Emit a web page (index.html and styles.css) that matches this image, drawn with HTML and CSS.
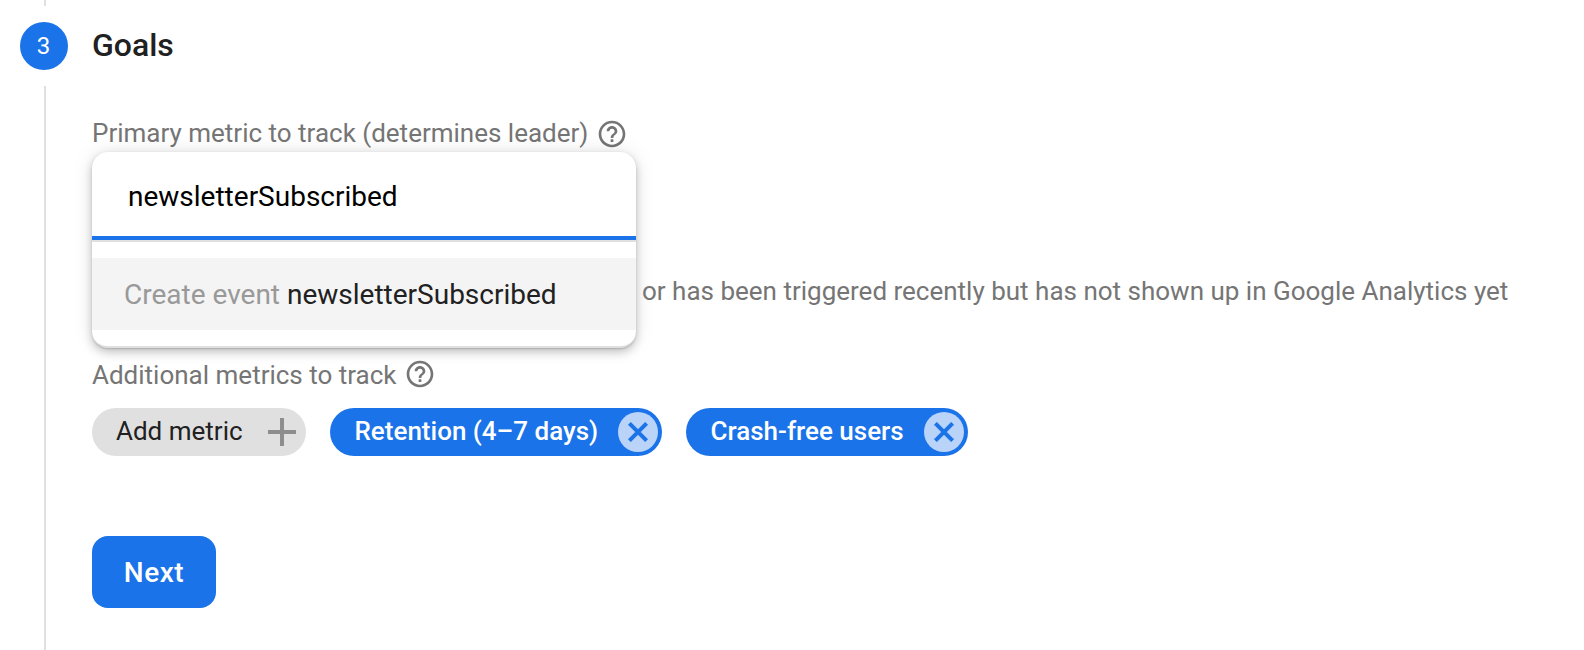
FILE: index.html
```html
<!DOCTYPE html>
<html lang="en">
<head>
<meta charset="utf-8">
<title>Goals</title>
<link rel="stylesheet" href="styles.css">
</head>
<body>
<svg class="defs" width="0" height="0" aria-hidden="true">
  <symbol id="help" viewBox="0 0 24 24"><path d="M11 18h2v-2h-2v2zm1-16C6.48 2 2 6.48 2 12s4.480 10 10 10 10-4.480 10-10S17.520 2 12 2zm0 18c-4.410 0-8-3.590-8-8s3.590-8 8-8 8 3.590 8 8-3.590 8-8 8zm0-14c-2.210 0-4 1.790-4 4h2c0-1.100.9-2 2-2s2 .9 2 2c0 2-3 1.750-3 5h2c0-2.250 3-2.500 3-5 0-2.210-1.790-4-4-4z"/></symbol>
  <symbol id="close" viewBox="0 0 20 20"><path d="M1.400 1.400 18.600 18.600M18.600 1.400 1.400 18.600" fill="none" stroke="currentColor" stroke-width="4"/></symbol>
</svg>
<div class="step">
  <div class="rail">
    <div class="line line-top"></div>
    <div class="badge">3</div>
    <div class="line line-rest"></div>
  </div>
  <main class="content">
    <h2 class="title">Goals</h2>
    <div class="label label-primary"><span>Primary metric to track (determines leader)</span><svg class="help"><use href="#help"/></svg></div>
    <div class="field">
      <div class="menu">
        <div class="input">newsletterSubscribed</div>
        <div class="options">
          <div class="option"><span class="muted">Create event</span> newsletterSubscribed</div>
        </div>
      </div>
      <p class="hint">or has been triggered recently but has not shown up in Google Analytics yet</p>
    </div>
    <div class="label label-more"><span>Additional metrics to track</span><svg class="help"><use href="#help"/></svg></div>
    <div class="chips">
      <div class="chip add"><span>Add metric</span><svg class="plus" viewBox="0 0 28 28"><path d="M14 0V28M0 14H28" stroke="currentColor" stroke-width="4"/></svg></div>
      <div class="chip retention"><span>Retention (4–7 days)</span><i class="remove"><svg><use href="#close"/></svg></i></div>
      <div class="chip crash"><span>Crash-free users</span><i class="remove"><svg><use href="#close"/></svg></i></div>
    </div>
    <button class="next">Next</button>
  </main>
</div>
</body>
</html>
```
FILE: styles.css
```css
* { box-sizing: border-box; }
body { margin: 0; background: #fff; font-family: Roboto, "Liberation Sans", sans-serif; color: #212121; }
.defs { display: block; }
.step { display: flex; height: 650px; overflow: hidden; }
.rail { display: flex; flex-direction: column; width: 92px; padding-left: 20px; flex: none; }
.line { width: 2px; margin-left: 24px; background: #e0e0e0; }
.line-top { height: 6px; }
.line-rest { flex: 1; margin-top: 16px; }
.badge { width: 48px; height: 48px; margin-top: 16px; border-radius: 50%; background: #1a73e8; color: #fff; font-size: 24px; line-height: 48px; text-align: center; padding-right: 1px; }
.content { flex: 1; }
.title { margin: 0; padding-top: 25px; font-size: 32px; line-height: 40px; font-weight: 500; }
.label { display: flex; align-items: center; height: 36px; font-size: 26px; line-height: 36px; color: #757575; white-space: nowrap; }
.label-primary { margin-top: 50px; }
.help { width: 32px; height: 32px; margin-left: 8px; fill: #757575; }
.label-primary .help { margin-top: 2px; }
.label-more .help { margin-left: 7.500px; }
.field { display: flex; align-items: flex-start; height: 196px; margin-top: 1px; }
.menu { width: 544px; height: 196px; flex: none; border-radius: 16px; background: #fff; overflow: hidden; box-shadow: 0 4px 10px rgba(0,0,0,.2), 0 0 20px rgba(0,0,0,.1), 0 1px 2px rgba(0,0,0,.16); border-bottom: 2px solid #e0e0e0; }
.input { height: 88px; padding-left: 36px; border-bottom: 4px solid #1a73e8; color: #000; font-size: 28px; line-height: 90px; }
.options { padding: 16px 0; border-top: 2px solid #e0e0e0; }
.option { height: 72px; padding-left: 32px; background: #f4f4f4; font-size: 28px; line-height: 74px; white-space: nowrap; }
.muted { color: #999; }
.hint { margin: 121px 0 0 6px; font-size: 26px; line-height: 36px; color: #757575; white-space: nowrap; }
.label-more { margin-top: 8px; }
.label-more span { padding-top: 2px; }
.chips { display: flex; gap: 24px; margin-top: 16px; }
.chip { display: flex; align-items: center; justify-content: space-between; height: 48px; border-radius: 24px; padding: 0 4px 2px 24px; font-size: 26px; font-weight: 500; color: #fff; background: #1a73e8; white-space: nowrap; }
.add { width: 214px; padding-right: 10px; background: #e0e0e0; color: #212121; font-weight: 400; }
.retention { width: 332px; padding-left: 24.500px; padding-right: 3.800px; }
.crash { width: 282px; padding-left: 24.500px; padding-right: 4.500px; }
.plus { width: 28px; height: 28px; color: #8d8d8d; margin-top: 2px; }
.remove { display: flex; align-items: center; justify-content: center; width: 40px; height: 40px; margin-top: 2px; border-radius: 50%; background: #bad3f8; color: #1a73e8; }
.remove svg { width: 20px; height: 20px; }
.next { display: block; width: 124px; height: 72px; margin-top: 80px; padding: 2px 0 0; border: 0; border-radius: 16px; background: #1a73e8; color: #fff; font: 500 28px/70px Roboto, "Liberation Sans", sans-serif; letter-spacing: 0.5px; }
```
